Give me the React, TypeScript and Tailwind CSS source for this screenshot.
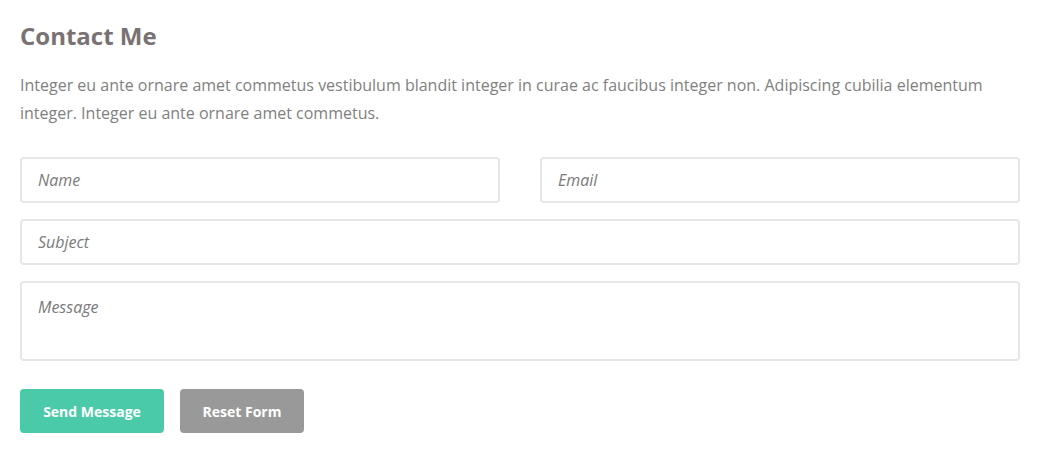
import React from "react";

const font = { fontFamily: '"Open Sans", "Noto Sans", sans-serif' };

export default function App() {
  const field =
    "w-full rounded-[4px] border-2 border-[#e6e6e6] bg-white px-[16px] text-[16px] italic text-[#777] placeholder:text-[#7a7a7a] outline-none";

  return (
    <div className="min-h-[472px] bg-white px-[20px] pt-[18px]" style={font}>
      <div className="w-[1000px]">
        {/* Encabezado */}
        <h2 className="text-[24px] font-bold leading-[36px] text-[#7a7272]">Contact Me</h2>
        <p className="mt-[17px] text-[16px] leading-[28px] text-[#7f7f7f]">
          Integer eu ante ornare amet commetus vestibulum blandit integer in curae ac faucibus integer non. Adipiscing cubilia elementum
          integer. Integer eu ante ornare amet commetus.
        </p>

        {/* Formulario */}
        <form className="mt-[30px] flex flex-col gap-[16px]">
          <div className="grid grid-cols-2 gap-[40px]">
            <input className={`${field} h-[46px]`} placeholder="Name" />
            <input className={`${field} h-[46px]`} placeholder="Email" />
          </div>
          <input className={`${field} h-[46px]`} placeholder="Subject" />
          <textarea className={`${field} h-[80px] resize-none pt-[12px]`} placeholder="Message" />

          <div className="mt-[12px] flex gap-[16px]">
            <button
              type="button"
              className="h-[44px] w-[144px] rounded-[4px] bg-[#4acaa8] text-[14px] font-bold text-white"
            >
              Send Message
            </button>
            <button
              type="button"
              className="h-[44px] w-[124px] rounded-[4px] bg-[#999999] text-[14px] font-bold text-white"
            >
              Reset Form
            </button>
          </div>
        </form>
      </div>
    </div>
  );
}
